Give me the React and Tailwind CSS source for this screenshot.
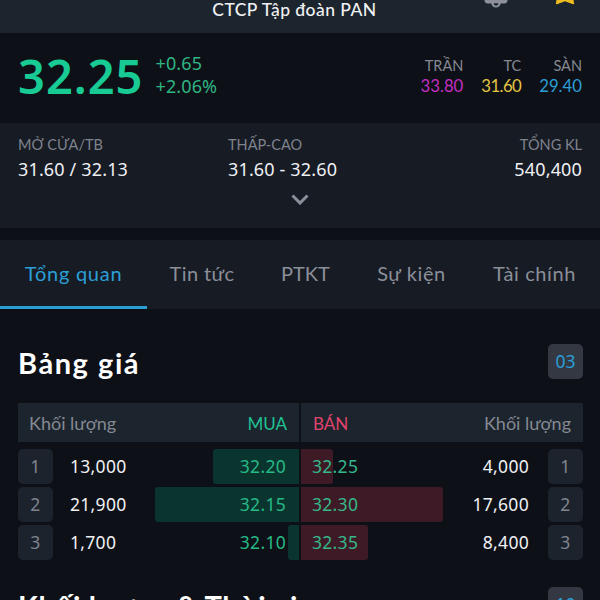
import clsx from "clsx";

const limits = [
  { label: "TRẦN", value: "33.80", color: "text-[#c22fc0]" },
  { label: "TC", value: "31.60", color: "text-[#e3c443] tracking-[-0.6px]" },
  { label: "SÀN", value: "29.40", color: "text-[#2a9fd6]" },
];

const tabs = [
  { label: "Tổng quan", width: "w-[147px]", spacing: "tracking-[0.75px]", active: true },
  { label: "Tin tức", width: "w-[110px]", spacing: "tracking-[0.4px]" },
  { label: "PTKT", width: "w-[97px]", spacing: "tracking-normal" },
  { label: "Sự kiện", width: "w-[115px]", spacing: "tracking-[0.6px]" },
  { label: "Tài chính", width: "w-[131px]", spacing: "tracking-[0.6px]" },
];

const orders = [
  { buyVol: "13,000", buy: "32.20", buyBar: 86, sell: "32.25", sellVol: "4,000", sellBar: 32 },
  { buyVol: "21,900", buy: "32.15", buyBar: 144, sell: "32.30", sellVol: "17,600", sellBar: 142 },
  { buyVol: "1,700", buy: "32.10", buyBar: 11, sell: "32.35", sellVol: "8,400", sellBar: 67 },
];

const num = "font-['Noto_Sans',sans-serif]";

function TopBar() {
  return (
    <header className="relative h-[33px] shrink-0 bg-[#1c242d]">
      <h1 className="pr-[11px] text-center text-[17.5px] leading-5 tracking-[0.45px] font-medium text-[#f0f1f4] whitespace-nowrap">
        CTCP Tập đoàn PAN
      </h1>
      <svg className="absolute right-[92px] top-0" width="24" height="8" viewBox="0 0 24 8" fill="none">
        <path d="M0.5 0h23c0 2.200-1.200 3.600-3 3.600h-17C1.700 3.600.5 2.200.5 0z" fill="#8b909a" />
        <path d="M8.400 2.800a3.600 3.600 0 0 0 7.200 0" stroke="#8b909a" strokeWidth="2.400" />
        <path d="M10 3.600h4v.6a2 1.400 0 0 1-4 0z" fill="#1c242d" />
      </svg>
      <svg className="absolute right-[25px] top-0" width="20" height="5" viewBox="0 0 20 5">
        <path d="M1.500 0h17l.7 4-1.200.300L10 1.200 2 4.300.8 4z" fill="#f0bd1e" />
      </svg>
    </header>
  );
}

function Stat({ label, value, className }) {
  return (
    <div className={className}>
      <div className="text-[14.5px] leading-5 text-[#7f838d]">{label}</div>
      <div className={clsx(num, "mt-[2px] text-[18px] leading-6 tracking-[0.15px] text-[#f0f1f4]")}>{value}</div>
    </div>
  );
}

function Level({ n }) {
  return (
    <div
      className={clsx(
        num,
        "flex h-[35px] w-[35px] shrink-0 items-center justify-center rounded-[5px] bg-[#1c232d] text-[17.5px] text-[#7f838d]"
      )}
    >
      {n}
    </div>
  );
}

function SectionTitle({ title, badge, spacing }) {
  return (
    <div className="flex h-[35px] items-center justify-between">
      <h2 className={clsx("pt-[3px] text-[29px] leading-9 font-bold text-white whitespace-nowrap", spacing)}>
        {title}
      </h2>
      <div
        className={clsx(
          num,
          "flex h-[35px] w-[35px] items-center justify-center rounded-[5px] bg-[#343843] text-[17.5px] text-[#2a9fd6]"
        )}
      >
        {badge}
      </div>
    </div>
  );
}

export default function App() {
  return (
    <div className="flex h-[600px] w-[600px] flex-col overflow-hidden bg-[#0e1017] font-[Lato,Inter,sans-serif]">
      <TopBar />

      <section className="flex h-[90px] shrink-0 px-[18px]">
        <div
          className={clsx(
            num,
            "pt-[12px] text-[47px] leading-[62px] tracking-[1px] font-semibold text-[#18ca94]"
          )}
        >
          32.25
        </div>
        <div className={clsx(num, "ml-[12px] pt-[19px] text-[18px] leading-[23px] tracking-[0.1px] text-[#2fb583]")}>
          <div>+0.65</div>
          <div>+2.06%</div>
        </div>
        <div className="ml-auto flex gap-[18px] pt-[23px] text-right">
          {limits.map((l) => (
            <div key={l.label}>
              <div className="text-[14.5px] leading-5 text-[#858993]">{l.label}</div>
              <div className={clsx("text-[16.75px] leading-5", l.color)}>{l.value}</div>
            </div>
          ))}
        </div>
      </section>

      <section className="h-[105px] shrink-0 bg-[#171b24] px-[18px] pt-[12px]">
        <div className="flex">
          <Stat className="w-[210px]" label="MỞ CỬA/TB" value="31.60 / 32.13" />
          <Stat label="THẤP-CAO" value="31.60 - 32.60" />
          <Stat className="ml-auto text-right" label="TỔNG KL" value="540,400" />
        </div>
        <svg className="mx-auto mt-[13px]" width="18" height="11" viewBox="0 0 18 11" fill="none">
          <path d="M1.500 1.500 9 9l7.500-7.500" stroke="#8b8f99" strokeWidth="3" />
        </svg>
      </section>

      <nav className="mt-[12px] flex h-[69px] shrink-0 bg-[#171b24]">
        {tabs.map((t) => (
          <div
            key={t.label}
            className={clsx(
              "flex shrink-0 items-center justify-center border-b-[3px] text-[20px] whitespace-nowrap",
              t.width,
              t.spacing,
              t.active ? "border-[#2a9fd6] text-[#2a9fd6]" : "border-transparent text-[#8b8f99]"
            )}
          >
            {t.label}
          </div>
        ))}
      </nav>

      <main className="flex flex-col pt-[35px] pr-[17px] pl-[18px]">
        <SectionTitle title="Bảng giá" badge="03" spacing="tracking-[1.55px]" />

        <div className="mt-[24px] flex h-[39px] gap-[2px] text-[18px]">
          <div className="flex w-[281px] items-center justify-between bg-[#1c242d] pt-[2px] pr-[12px] pl-[11px]">
            <span className="text-[#858993]">Khối lượng</span>
            <span className="text-[17px] text-[#20c294]">MUA</span>
          </div>
          <div className="flex flex-1 items-center justify-between bg-[#1c242d] px-3 pt-[2px]">
            <span className="text-[17px] text-[#e0436c]">BÁN</span>
            <span className="text-[#858993]">Khối lượng</span>
          </div>
        </div>

        <div
          className={clsx(
            num,
            "mt-[7px] flex flex-col gap-[3px] text-[17.5px] tracking-[0.3px] text-[#f0f1f4]"
          )}
        >
          {orders.map((o, i) => (
            <div key={o.buy} className="flex h-[35px] gap-[2px]">
              <div className="relative flex w-[281px] items-center">
                <div className="absolute inset-y-0 right-0 rounded-l-[3px] bg-[#0a352f]" style={{ width: o.buyBar }} />
                <Level n={i + 1} />
                <span className="ml-[17px]">{o.buyVol}</span>
                <span className="relative ml-auto mr-[13px] text-[#25b987]">{o.buy}</span>
              </div>
              <div className="relative flex flex-1 items-center">
                <div className="absolute inset-y-0 left-0 rounded-r-[3px] bg-[#3d1a26]" style={{ width: o.sellBar }} />
                <span className="relative ml-[11px] text-[#35b78a]">{o.sell}</span>
                <span className="ml-auto mr-[19px]">{o.sellVol}</span>
                <Level n={i + 1} />
              </div>
            </div>
          ))}
        </div>

        <div className="mt-[27px]">
          <SectionTitle title="Khối lượng & Thời gian" badge="10" spacing="tracking-[0.7px]" />
        </div>
      </main>
    </div>
  );
}
